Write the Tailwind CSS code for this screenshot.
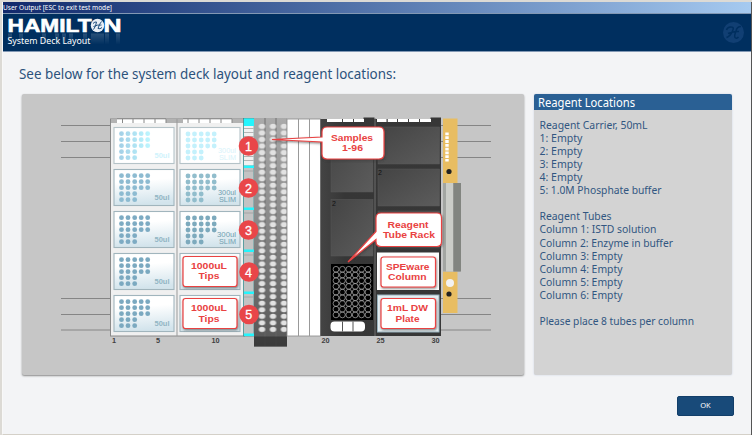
<!DOCTYPE html>
<html lang="en">
<head>
<meta charset="utf-8">
<title>System Deck Layout</title>
<script src="https://cdn.jsdelivr.net/npm/@tailwindcss/browser@4"></script>
</head>
<body class="w-[752px] h-[435px] overflow-hidden bg-[#e4e4e2] font-['Noto_Sans','DejaVu_Sans',sans-serif]">
<div class="w-[752px] h-[435px] border-t-2 border-l-2 border-[#dcdad5] flex">
<div class="w-[749px] h-[433px] flex flex-col bg-[#f3f4f6] border-l border-b border-b-[#d4d0c8] border-l-[#f8f8f8]">
  <div class="h-[11px] flex items-center bg-linear-to-r from-[#12296c] to-[#a6caf0] text-white text-[7px] leading-none"><svg width="120" height="11" class="block"><text x="0" y="8" font-size="7.300" textLength="109" lengthAdjust="spacingAndGlyphs" fill="#fff">User Output [ESC to exit test mode]</text></svg></div>
  <header class="h-[39px] shrink-0 bg-[#002f5f] border-t border-b border-[#8298b4] flex justify-between">
    <svg width="150" height="37" viewBox="3 14 150 37" class="block">
      <defs><linearGradient id="refl" x1="0" y1="0" x2="0" y2="1"><stop offset="0" stop-color="#fff" stop-opacity=".16"/><stop offset="1" stop-color="#fff" stop-opacity="0"/></linearGradient></defs>
      <g font-family="Liberation Sans, Arial, sans-serif" font-weight="bold" font-size="17.5" fill="#fff" stroke="#fff" stroke-width=".6">
        <text x="7.5" y="32" textLength="84" lengthAdjust="spacingAndGlyphs">HAMILT</text><text x="103.500" y="32" textLength="18" lengthAdjust="spacingAndGlyphs">N</text>
      </g>
      <path d="M8 33.500h4v11H8zM19 33.500h4v11h-4zM42 33.500h4v11h-4zM55 33.500h4v11h-4zM62 33.500h4v11h-4zM69 33.500h4v11h-4zM83 33.500h4v11h-4zM91 33.500h13v11H91zM105 33.500h4v11h-4zM116 33.500h4v11h-4z" fill="url(#refl)"/>
      <circle cx="97.500" cy="25.500" r="6.700" fill="#e8eef5"/>
      <path d="M93 23.500q2-2 3.500-1.500q-.5 4-3 7.500M101.500 21.500q-2 2-3.500 7q2 1 4-1M93.500 26.500q4-2 8-1.500" fill="none" stroke="#21507f" stroke-width="1"/>
      <text x="7.500" y="44" font-size="9.700" textLength="83" lengthAdjust="spacingAndGlyphs" fill="#fff">System Deck Layout</text>
    </svg>
    <svg width="30" height="37" viewBox="722 14 30 37" class="block"><circle cx="734.500" cy="32.500" r="10.500" fill="#113f73"/><path d="M727.500 30q1-3.500 5-3q3 0 1 4q-2 5-6 6.500M742 26.500q-4 0-5 4.500q-2 5-1 6.500q2 1.500 3.500-.5M729 33.500q6-2.500 11-2" fill="none" stroke="#002f5f" stroke-width="1.500"/></svg>
  </header>
  <div class="h-[42px] shrink-0 pl-4"><svg width="400" height="42" class="block"><text x="0" y="27" font-size="14.800" fill="#2c527c" textLength="377" lengthAdjust="spacingAndGlyphs">See below for the system deck layout and reagent locations:</text></svg></div>
  <main class="flex pl-[19px] h-[282px] shrink-0 gap-[10px]">
    <section class="w-[502px] h-[281px] shrink-0 bg-[#c6c6c6] rounded-[2px] shadow-[0_1px_2px_#888]">
<svg width="502" height="281" viewBox="22 94 502 281" class="block" font-family="Liberation Sans, Arial, sans-serif" font-weight="bold">
<defs>
<linearGradient id="tile" x1="0" y1="0" x2=".12" y2="1"><stop offset=".35" stop-color="#fff"/><stop offset="1" stop-color="#d3e4ec"/></linearGradient>
<linearGradient id="rack" x1="0" y1="0" x2="0" y2="1"><stop offset="0" stop-color="#aaa"/><stop offset=".45" stop-color="#898989"/><stop offset="1" stop-color="#555"/></linearGradient>
<linearGradient id="plate" x1="0" y1="0" x2="1" y2="1"><stop offset="0" stop-color="#444"/><stop offset="1" stop-color="#5c5c5c"/></linearGradient>
<linearGradient id="dark" x1="0" y1="0" x2="1" y2="0"><stop offset="0" stop-color="#444"/><stop offset=".2" stop-color="#363636"/><stop offset="1" stop-color="#373737"/></linearGradient>
<g id="dots"><g id="r5"><circle cx="7.500" cy="6" r="2.400"/><circle cx="14" cy="6" r="2.400"/><circle cx="20.700" cy="6" r="2.400"/><circle cx="27.200" cy="6" r="2.400"/><circle cx="33.700" cy="6" r="2.400"/></g><use href="#r5" y="6"/><use href="#r5" y="12"/><g id="r3"><circle cx="7.500" cy="24" r="2.400"/><circle cx="14" cy="24" r="2.400"/><circle cx="20.700" cy="24" r="2.400"/></g><use href="#r3" y="6"/></g>
<linearGradient id="fade" gradientUnits="userSpaceOnUse" x1="5" y1="0" x2="36" y2="0"><stop offset="0" stop-color="#a3cfe6"/><stop offset="1" stop-color="#bdf6ff"/></linearGradient>
<filter id="sh" x="-20%" y="-20%" width="140%" height="150%"><feDropShadow dx=".7" dy="1.200" stdDeviation=".8" flood-color="#333" flood-opacity=".6"/></filter>
<pattern id="tubes" x="256.500" y="123.100" width="11" height="6.550" patternUnits="userSpaceOnUse"><ellipse cx="5.500" cy="3.270" rx="3.200" ry="2.500" fill="#e2e2e2"/></pattern>
<g id="wells" fill="none" stroke="#b5b5b5" stroke-width=".7"><circle cx="336" cy="0" r="2.900"/><circle cx="342.400" cy="0" r="2.900"/><circle cx="348.800" cy="0" r="2.900"/><circle cx="355.200" cy="0" r="2.900"/><circle cx="361.600" cy="0" r="2.900"/><circle cx="368" cy="0" r="2.900"/></g>
</defs>
<path d="M61 125.500h50M61 141.500h50M61 157.500h50M61 298.500h50M61 314.500h50M61 330h50M441 125.500h50M441 141.500h50M441 157.500h50M441 298.500h50M441 314.500h50M441 330h50" stroke="#858585" stroke-width="1.100"/>
<rect x="110.500" y="119" width="134" height="217" fill="#f0f0f0" stroke="#8a8a8a"/>
<path d="M111 121h133" stroke="#b2b2b2" stroke-width="4"/>
<path d="M117 119h49v4h-49zM183 119h49v4h-49z" fill="#fff"/><path d="M117 118.800h49M183 118.800h49M122.500 119v4M133 119v4M144 119v4M155 119v4M166 119v4M188 119v4M199 119v4M210 119v4M221 119v4M232 119v4" stroke="#888"/>
<path d="M177 119v217" stroke="#999"/>
<g fill="url(#tile)" stroke="#a1b5bd" stroke-width="1.100">
<rect x="114" y="127.500" width="60" height="36" fill="#fff" stroke="#b5c3c8"/><rect x="114" y="169.500" width="60" height="36"/><rect x="114" y="211.500" width="60" height="36"/><rect x="114" y="253.500" width="60" height="36"/><rect x="114" y="295.500" width="60" height="36"/>
<rect x="180" y="127.500" width="60" height="36" fill="#fff" stroke="#b5c3c8"/><rect x="180" y="169.500" width="60" height="36"/><rect x="180" y="211.500" width="60" height="36"/><rect x="180" y="253.500" width="60" height="36"/><rect x="180" y="295.500" width="60" height="36"/></g>
<use href="#dots" x="114" y="127.700" fill="url(#fade)"/><use href="#dots" x="114" y="169.700" fill="#8dbbd1"/><use href="#dots" x="114" y="211.700" fill="#7dabc3"/><use href="#dots" x="114" y="253.700" fill="#7ba9c0"/><use href="#dots" x="114" y="295.700" fill="#7ba9c0"/>
<use href="#dots" x="180.500" y="128" fill="#c4f1fc"/><use href="#dots" x="180.500" y="170" fill="#91bdcc"/><use href="#dots" x="180.500" y="212" fill="#7daabd"/>
<g font-size="6.500" fill="#91b5c4"><text x="154.500" y="158" textLength="15" lengthAdjust="spacingAndGlyphs" fill="#d0f3fc">50ul</text><text x="154.500" y="200" textLength="15" lengthAdjust="spacingAndGlyphs">50ul</text><text x="154.500" y="242" textLength="15" lengthAdjust="spacingAndGlyphs">50ul</text><text x="154.500" y="284" textLength="15" lengthAdjust="spacingAndGlyphs">50ul</text><text x="154.500" y="326" textLength="15" lengthAdjust="spacingAndGlyphs">50ul</text>
<g font-weight="normal" fill="#d8f3fa"><text x="218" y="152.500" textLength="18" lengthAdjust="spacingAndGlyphs">300ul</text><text x="219" y="160" textLength="17" lengthAdjust="spacingAndGlyphs">SLIM</text></g>
<g font-weight="normal" fill="#719fb1"><text x="218" y="194.500" textLength="18" lengthAdjust="spacingAndGlyphs">300ul</text><text x="219" y="202" textLength="17" lengthAdjust="spacingAndGlyphs">SLIM</text><text x="217" y="236.500" textLength="19" lengthAdjust="spacingAndGlyphs">300ul</text><text x="219" y="244" textLength="17" lengthAdjust="spacingAndGlyphs">SLIM</text></g></g>
<rect x="243.500" y="118.500" width="10.500" height="217.500" fill="#c3c3c3" stroke="#3c8f92" stroke-width=".8"/><rect x="244" y="126" width="9.500" height="39" fill="#f1f1f1"/>
<path d="M244 128.500h9.500M244 132.500h9.500M244 136.500h9.500M244 156.500h9.500M244 160.500h9.500M244 171h9.500M244 213h9.500M244 255h9.500M244 297h9.500" stroke="#999" stroke-width=".7"/>
<path d="M244 118.500h10v7.500h-10zM244 165.500h10v2.500h-10zM244 207.500h10v2.500h-10zM244 249.500h10v2.500h-10zM244 291.500h10v2.500h-10zM244 333.500h10v2.500h-10z" fill="#23f5fd"/>
<rect x="254" y="118" width="33" height="228.500" fill="url(#rack)"/><path d="M265 118v228M276 118v228" stroke="#666" stroke-width=".8"/><rect x="256.500" y="123.100" width="30.500" height="209.600" fill="url(#tubes)"/><rect x="254" y="336.500" width="33" height="10" fill="#333" opacity=".75"/>
<rect x="287" y="119" width="33.500" height="217" fill="#fff" stroke="#888" stroke-width=".8"/><path d="M298.500 119v217M309.500 119v217" stroke="#999"/>
<path d="M320.500 119h43v-1.500h11V119h56v-1.500h10.500v218.500h-120.500z" fill="url(#dark)"/><path d="M327 119h37v3h-37zM377 119h10v3h-10zM387.500 119h43.500v3h-43.500z" fill="#fff"/><path d="M342.500 119v3M353.500 119v3M387 119v3M397.500 119v3M408.500 119v3M419.500 119v3" stroke="#444"/>
<path d="M375 118v218" stroke="#777" stroke-width=".9"/>
<g fill="url(#plate)" stroke="#5a5a5a" stroke-width=".5"><rect x="331" y="128" width="42" height="64"/><rect x="331" y="199.500" width="42" height="56.500"/><rect x="378" y="127" width="61.500" height="37"/><rect x="378" y="169" width="61.500" height="37"/><rect x="378" y="211" width="61.500" height="37"/></g>
<text x="378" y="174.500" font-size="7" font-weight="normal" fill="#111">2</text><text x="332" y="206" font-size="7" font-weight="normal" fill="#111">2</text>
<rect x="331" y="264" width="42" height="56" fill="#000"/>
<use href="#wells" y="269.300"/><use href="#wells" y="275"/><use href="#wells" y="280.700"/><use href="#wells" y="286.400"/><use href="#wells" y="292.100"/><use href="#wells" y="297.800"/><use href="#wells" y="303.500"/><use href="#wells" y="309.200"/><use href="#wells" y="314.900"/>
<rect x="330.500" y="321.500" width="34.500" height="10" rx="4" fill="#fff"/><path d="M342.500 321.500v10M353 321.500v10" stroke="#555"/>
<rect x="377" y="252.500" width="62" height="37.500" fill="#fff"/><rect x="377.500" y="295" width="61.500" height="37" fill="#e5eef2" stroke="#98b2bd"/>
<path d="M443 118.500h14.500V183H443zM443 271.500h14.500V313H443z" fill="#e8bd62"/><path d="M443 183h17.500v88.500H443z" fill="#a3a6a2"/><path d="M446 183h7v88.500h-7z" fill="#cbcdc8"/><path d="M453.500 183h7.500v88.500h-7.500z" fill="#828580"/>
<path d="M447 132.500v29" stroke="#fff" stroke-width="3.400" stroke-dasharray="2.800 1" /><circle cx="449" cy="171.500" r="2.600" fill="#222"/><circle cx="450" cy="283" r="4" fill="#f2f2f2"/><circle cx="449" cy="294" r="2.600" fill="#222"/>
<g filter="url(#sh)" fill="#fff" stroke="#e94242" stroke-width="1.200">
<rect x="183" y="256.500" width="54" height="30" rx="2.500"/><rect x="183" y="298.500" width="54" height="30" rx="2.500"/><rect x="381" y="257" width="54.500" height="30" rx="2.500"/><rect x="381" y="298.500" width="54.500" height="30" rx="2.500"/>
<path d="M327 127h52q5 0 5 5v22q0 5-5 5h-52q-5 0-5-5V142l-50-2.500l50-2.500v-5q0-5 5-5z"/>
<path d="M381 213h56q4.500 0 4.500 5v23.500q0 5-4.500 5h-56q-5 0-5-5v-2L348 262l28-30.500V218q0-5 5-5z"/></g>
<g fill="#e94242" font-size="9.300">
<text x="331" y="140.500" textLength="42" lengthAdjust="spacingAndGlyphs">Samples</text><text x="342" y="151" textLength="21" lengthAdjust="spacingAndGlyphs">1-96</text>
<text x="387.500" y="227.500" textLength="41" lengthAdjust="spacingAndGlyphs">Reagent</text><text x="383" y="238" textLength="52" lengthAdjust="spacingAndGlyphs">Tube Rack</text>
<text x="386" y="269.500" textLength="43.500" lengthAdjust="spacingAndGlyphs">SPEware</text><text x="388" y="280" textLength="38.500" lengthAdjust="spacingAndGlyphs">Column</text>
<text x="387" y="311" textLength="41" lengthAdjust="spacingAndGlyphs">1mL DW</text><text x="395.500" y="321.500" textLength="24" lengthAdjust="spacingAndGlyphs">Plate</text>
<text x="191" y="268.500" textLength="36" lengthAdjust="spacingAndGlyphs">1000uL</text><text x="198.500" y="279" textLength="21" lengthAdjust="spacingAndGlyphs">Tips</text><text x="191" y="311" textLength="36" lengthAdjust="spacingAndGlyphs">1000uL</text><text x="198.500" y="321.500" textLength="21" lengthAdjust="spacingAndGlyphs">Tips</text></g>
<g fill="#e94649"><circle cx="248.500" cy="146" r="9.800"/><circle cx="248.500" cy="188" r="9.800"/><circle cx="248.500" cy="230" r="9.800"/><circle cx="249" cy="272" r="9.800"/><circle cx="249" cy="314.500" r="9.800"/></g>
<g fill="#fff" font-size="12.500" font-weight="normal" stroke="#fff" stroke-width=".3" text-anchor="middle"><text x="248.500" y="150.500">1</text><text x="248.500" y="192.500">2</text><text x="248.500" y="234.500">3</text><text x="248.500" y="276.500">4</text><text x="248.800" y="319">5</text></g>
<g fill="#404040" font-size="7.300" text-anchor="middle"><text x="114" y="343.300">1</text><text x="158" y="343.300">5</text><text x="215.500" y="343.300">10</text><text x="325.500" y="343.300">20</text><text x="380.500" y="343.300">25</text><text x="435.500" y="343.300">30</text></g>
</svg>
    </section>
    <aside class="w-[198px] h-[281px] shrink-0 bg-[#d3d3d3] rounded-[2px] overflow-hidden shadow-[0_0_2px_#c4cee0]">
      <div class="h-[16px] bg-[#2a6094]"><svg width="198" height="16" class="block"><text x="4" y="12.500" font-size="12" fill="#fff" textLength="97" lengthAdjust="spacingAndGlyphs">Reagent Locations</text></svg></div>
      <svg width="198" height="264" viewBox="534 110 198 264" class="block" font-size="11.500" fill="#315681">
        <text x="539.500" y="129" textLength="108" lengthAdjust="spacingAndGlyphs">Reagent Carrier, 50mL</text>
        <text x="539.500" y="142" textLength="43" lengthAdjust="spacingAndGlyphs">1: Empty</text>
        <text x="539.500" y="155" textLength="43" lengthAdjust="spacingAndGlyphs">2: Empty</text>
        <text x="539.500" y="168" textLength="43" lengthAdjust="spacingAndGlyphs">3: Empty</text>
        <text x="539.500" y="181" textLength="43" lengthAdjust="spacingAndGlyphs">4: Empty</text>
        <text x="539.500" y="194" textLength="122" lengthAdjust="spacingAndGlyphs">5: 1.0M Phosphate buffer</text>
        <text x="539.500" y="220" textLength="72" lengthAdjust="spacingAndGlyphs">Reagent Tubes</text>
        <text x="539.500" y="233" textLength="117" lengthAdjust="spacingAndGlyphs">Column 1: ISTD solution</text>
        <text x="539.500" y="246.500" textLength="133.500" lengthAdjust="spacingAndGlyphs">Column 2: Enzyme in buffer</text>
        <text x="539.500" y="259.500" textLength="83" lengthAdjust="spacingAndGlyphs">Column 3: Empty</text>
        <text x="539.500" y="272.500" textLength="83" lengthAdjust="spacingAndGlyphs">Column 4: Empty</text>
        <text x="539.500" y="285.500" textLength="83" lengthAdjust="spacingAndGlyphs">Column 5: Empty</text>
        <text x="539.500" y="298.500" textLength="83" lengthAdjust="spacingAndGlyphs">Column 6: Empty</text>
        <text x="539.500" y="325" textLength="154.500" lengthAdjust="spacingAndGlyphs">Please place 8 tubes per column</text>
      </svg>
    </aside>
  </main>
  <div class="flex justify-end pt-5 pr-[17px]"><button class="w-[57px] h-[20px] rounded-[2px] bg-[#184a79] border border-[#123e69] text-white text-[7.5px] leading-none">OK</button></div>
</div>
<div class="w-px h-[433px] bg-[#555]"></div>
</div>
</body>
</html>
